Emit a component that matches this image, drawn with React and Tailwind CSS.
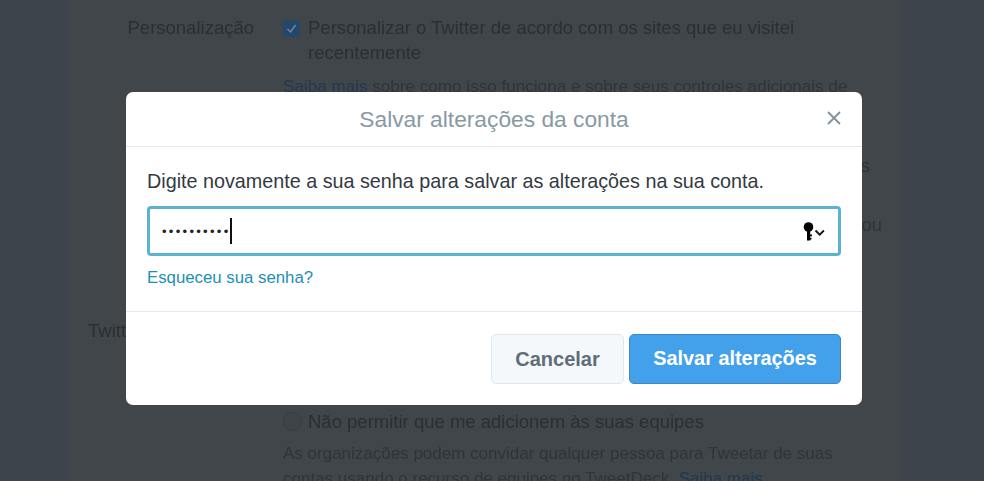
import React from "react";

function Key() {
  return (
    <svg width="23" height="19" viewBox="0 0 23 19" className="block">
      <circle cx="5.5" cy="5" r="4.8" fill="#000" />
      <rect x="4" y="8" width="3.2" height="10.5" fill="#000" />
      <rect x="6" y="12.5" width="3" height="1.8" fill="#000" />
      <rect x="6" y="15.8" width="2.4" height="1.8" fill="#000" />
      <path d="M12.5 8.5l4.2 4.2 4.2-4.2" fill="none" stroke="#111" strokeWidth="1.8" />
    </svg>
  );
}

export default function App() {
  return (
    <div className="relative w-[984px] h-[481px] overflow-hidden bg-[#3e444b] font-['Liberation_Sans',Arial,sans-serif]">
      {/* page behind the dialog */}
      <div className="ml-[68px] w-[832px] h-[481px] bg-[#41464a] text-[#2a2f35] text-[18.5px] leading-[25px] overflow-hidden pt-[15px] blur-[0.4px]">
        <div className="flex">
          <div className="w-[186px] text-right">Personalização</div>
          <div className="ml-[29px] w-[600px]">
            <div className="flex gap-[8px]">
              <span className="mt-[5px] flex w-[17px] h-[17px] shrink-0 items-center justify-center rounded-[3px] bg-[#25476a]">
                <svg width="13" height="13" viewBox="0 0 13 13">
                  <path d="M2.5 7l3 3 5-7" fill="none" stroke="#6f8ba6" strokeWidth="1.4" />
                </svg>
              </span>
              <p className="whitespace-nowrap">Personalizar o Twitter de acordo com os sites que eu visitei<br />recentemente</p>
            </div>
            <p className="mt-[9px] whitespace-nowrap text-[17.1px] text-[#2f343a]">
              <span className="text-[#21384f]">Saiba mais</span> sobre como isso funciona e sobre seus controles adicionais de
            </p>
            <p className="mt-[54px] pr-[13px] text-right text-[#2f343a]">s</p>
            <p className="mt-[34px] pr-[1px] text-right text-[#2f343a]">ou</p>
          </div>
        </div>
        <div className="mt-[81px] flex">
          <div className="w-[186px] pl-[20px] whitespace-nowrap">Twitter para equipes</div>
          <div className="ml-[29px] w-[600px] pt-[91px]">
            <div className="flex items-center gap-[6px]">
              <span className="w-[19px] h-[19px] shrink-0 rounded-full border border-[#373c42] bg-[#3f4449]" />
              <span>Não permitir que me adicionem às suas equipes</span>
            </div>
            <p className="mt-[8px] text-[#2f343a] text-[17px] leading-[24.5px]">
              As organizações podem convidar qualquer pessoa para Tweetar de suas contas usando o recurso de equipes no TweetDeck. <span className="text-[#21384f]">Saiba mais</span>
            </p>
          </div>
        </div>
      </div>

      {/* dialog */}
      <div className="absolute left-[126px] top-[92px] w-[736px] h-[313px] rounded-[7px] bg-white flex flex-col">
        <div className="relative h-[55px] shrink-0 border-b border-[#e3e9ee] flex items-center justify-center text-[22.75px] text-[#8899a6]">
          Salvar alterações da conta
          <svg className="absolute right-[21px] top-[19px]" width="14" height="14" viewBox="0 0 14 14">
            <path d="M1 1l12 12M13 1L1 13" stroke="#7f919e" strokeWidth="1.8" />
          </svg>
        </div>
        <div className="flex-1 px-[21px] pt-[21px]">
          <p className="text-[19.75px] leading-[26px] text-[#333a41] whitespace-nowrap">
            Digite novamente a sua senha para salvar as alterações na sua conta.
          </p>
          <div className="mt-[12px] h-[50px] flex items-center justify-between rounded-[4px] border-[3px] border-[#5cb3d1] pl-[12px] pr-[12px]">
            <div className="flex items-center">
              <span className="text-[13px] tracking-[2.3px] text-[#222] leading-none">••••••••••</span>
              <span className="ml-[-1px] w-[2px] h-[26px] bg-[#111]" />
            </div>
            <Key />
          </div>
          <p className="mt-[10px] text-[16.8px] leading-[24px] text-[#1b8fb5]">Esqueceu sua senha?</p>
        </div>
        <div className="h-[94px] shrink-0 border-t border-[#e3e9ee] flex items-start justify-end gap-[5px] pt-[22px] pr-[21px]">
          <button className="w-[133px] h-[50px] rounded-[5px] border border-[#e1e8ed] bg-[#f5f8fa] text-[20px] font-bold text-[#5f6d78]">
            Cancelar
          </button>
          <button className="w-[212px] h-[50px] rounded-[5px] border border-[#3b88c3] bg-[#43a1ec] text-[19.9px] font-bold text-white">
            Salvar alterações
          </button>
        </div>
      </div>
    </div>
  );
}
